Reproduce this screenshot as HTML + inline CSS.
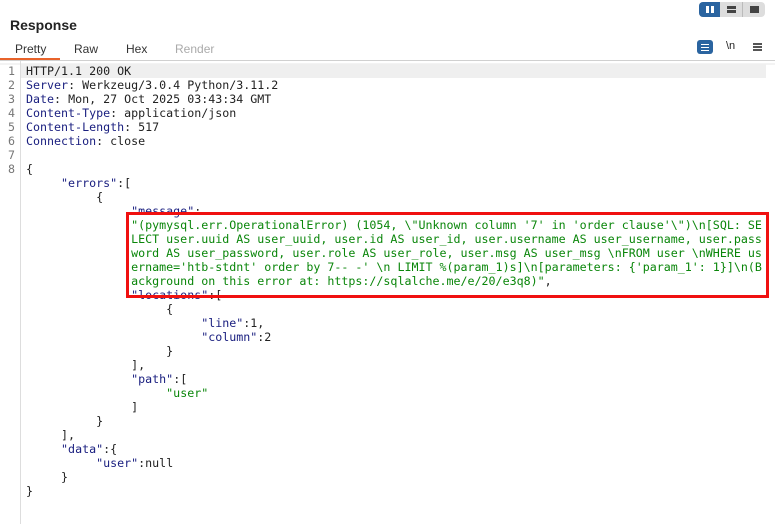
<!DOCTYPE html>
<html><head><style>
body{margin:0;width:775px;height:524px;background:#fff;overflow:hidden;position:relative;font-family:"Liberation Sans",sans-serif}
.t{position:absolute;left:10px;top:17px;font-size:14px;font-weight:bold;color:#222}
.tab{position:absolute;top:42px;font-size:12px;color:#333}
.ul{position:absolute;left:0;top:58px;width:60px;height:2px;background:#e8632b}
.hr{position:absolute;left:0;top:60px;width:775px;height:1px;background:#d0d0d0}
.gut{position:absolute;left:20px;top:61px;width:1px;height:463px;background:#ddd}
.hl{position:absolute;left:21px;top:64px;width:745px;height:14px;background:#efefef}
pre{position:absolute;margin:0;font-family:"DejaVu Sans Mono",monospace;font-size:11.65px;line-height:14px;color:#222}
.n{left:8px;top:64px;color:#777}
.c{left:26px;top:64px}
.k{color:#1b2080}.s{color:#0a860a}
.box{position:absolute;left:126px;top:212px;width:637px;height:80px;border:3px solid #f01010}
</style></head><body>
<div class="t">Response</div>
<div class="tab" style="left:15px">Pretty</div>
<div class="tab" style="left:74px">Raw</div>
<div class="tab" style="left:126px">Hex</div>
<div class="tab" style="left:175px;color:#aaa">Render</div>
<div class="ul"></div><div class="hr"></div>
<div style="position:absolute;left:699px;top:2px;width:66px;height:15px;background:#ddd;border-radius:4px"></div>
<div style="position:absolute;left:699px;top:2px;width:21px;height:15px;background:#2a64a0;border-radius:4px 0 0 4px"></div>
<div style="position:absolute;left:706px;top:6px;width:3px;height:7px;background:#fff"></div>
<div style="position:absolute;left:711px;top:6px;width:3px;height:7px;background:#fff"></div>
<div style="position:absolute;left:727px;top:6px;width:9px;height:3px;background:#444"></div>
<div style="position:absolute;left:727px;top:10px;width:9px;height:3px;background:#444"></div>
<div style="position:absolute;left:742px;top:2px;width:1px;height:15px;background:#bbb"></div>
<div style="position:absolute;left:750px;top:6px;width:9px;height:7px;background:#444"></div>
<div style="position:absolute;left:697px;top:40px;width:16px;height:14px;background:#2a64a0;border-radius:3px"></div>
<div style="position:absolute;left:701px;top:44px;width:8px;height:1px;background:#fff;box-shadow:0 3px 0 #fff,0 6px 0 #fff"></div>
<div style="position:absolute;left:726px;top:40px;font-size:11px;color:#222">\n</div>
<div style="position:absolute;left:753px;top:43px;width:9px;height:2px;background:#555;box-shadow:0 3px 0 #555,0 6px 0 #555"></div>
<div style="position:absolute;left:0;top:63px;width:775px;height:2px;background:#f3f3f3"></div>
<div class="hl"></div>
<div class="gut"></div>
<pre class="n">1
2
3
4
5
6
7
8</pre>
<pre class="c">HTTP/1.1 200 OK
<span class="k">Server</span>: Werkzeug/3.0.4 Python/3.11.2
<span class="k">Date</span>: Mon, 27 Oct 2025 03:43:34 GMT
<span class="k">Content-Type</span>: application/json
<span class="k">Content-Length</span>: 517
<span class="k">Connection</span>: close

{
     <span class="k">"errors"</span>:[
          {
               <span class="k">"message"</span>:
               <span class="s">"(pymysql.err.OperationalError) (1054, \"Unknown column '7' in 'order clause'\")\n[SQL: SE</span>
               <span class="s">LECT user.uuid AS user_uuid, user.id AS user_id, user.username AS user_username, user.pass</span>
               <span class="s">word AS user_password, user.role AS user_role, user.msg AS user_msg \nFROM user \nWHERE us</span>
               <span class="s">ername='htb-stdnt' order by 7-- -' \n LIMIT %(param_1)s]\n[parameters: {'param_1': 1}]\n(B</span>
               <span class="s">ackground on this error at: https://sqlalche.me/e/20/e3q8)"</span>,
               <span class="k">"locations"</span>:[
                    {
                         <span class="k">"line"</span>:1,
                         <span class="k">"column"</span>:2
                    }
               ],
               <span class="k">"path"</span>:[
                    <span class="s">"user"</span>
               ]
          }
     ],
     <span class="k">"data"</span>:{
          <span class="k">"user"</span>:null
     }
}</pre>
<div class="box"></div>
</body></html>
